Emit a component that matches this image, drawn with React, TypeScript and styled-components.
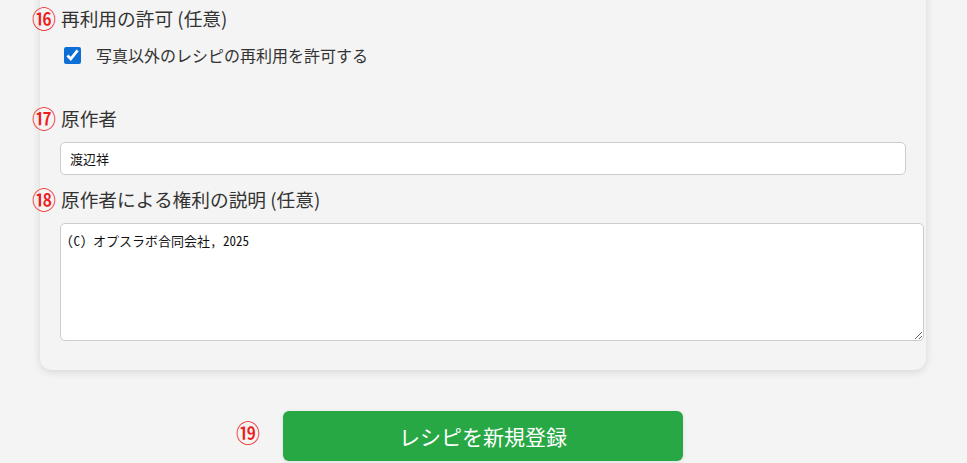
import React from 'react'
import styled, { createGlobalStyle } from 'styled-components'

const GlobalStyle = createGlobalStyle`
    html, body {
        margin: 0;
        padding: 0;
        background: #f4f4f4;
    }

    body {
        font-family: "Noto Sans CJK JP", "Noto Sans", sans-serif;
        color: #333;
    }
`

const App: React.FC = () => {
    return (
        <Page>
            <GlobalStyle />
            <Card>
                <Label>
                    <Marker>⑯</Marker>
                    <span>再利用の許可 (任意)</span>
                </Label>
                <CheckRow>
                    <Check type="checkbox" defaultChecked />
                    <span>写真以外のレシピの再利用を許可する</span>
                </CheckRow>

                <Label $gap={37}>
                    <Marker>⑰</Marker>
                    <span>原作者</span>
                </Label>
                <TextInput type="text" defaultValue="渡辺祥" />

                <Label $gap={10}>
                    <Marker>⑱</Marker>
                    <span>原作者による権利の説明 (任意)</span>
                </Label>
                <TextArea defaultValue="(C) オプスラボ合同会社, 2025" />
            </Card>

            <Actions>
                <Marker>⑲</Marker>
                <SubmitButton type="button">レシピを新規登録</SubmitButton>
                <span />
            </Actions>
        </Page>
    )
}

const Page = styled.div`
    width: 967px;
    height: 463px;
    overflow: hidden;
`

const Card = styled.div`
    margin: -40px 41px 0 40px;
    padding: 44px 20px 29px 20px;
    background: #f4f4f4;
    border-radius: 12px;
    box-shadow: 0 2px 8px rgba(0, 0, 0, 0.12);
`

const Label = styled.div<{ $gap?: number }>`
    display: flex;
    align-items: center;
    gap: 5px;
    margin-top: ${p => p.$gap ?? 0}px;
    margin-left: -28px;
    font-size: 18.7px;
    line-height: 27px;
    color: #333;
`

const Marker = styled.span`
    font-size: 24px;
    line-height: 1;
    font-weight: 500;
    color: #ee1c1c;
`

const CheckRow = styled.label`
    display: flex;
    align-items: center;
    gap: 15px;
    height: 24px;
    margin-top: 12px;
    padding-left: 4px;
    font-size: 16px;
    color: #333;
`

const Check = styled.input`
    width: 17px;
    height: 17px;
    margin: 0;
    accent-color: #0b6fd6;
`

const fieldBase = `
    box-sizing: border-box;
    display: block;
    border: 1px solid #cccccc;
    border-radius: 5px;
    background: #fff;
    color: #111;
    font-family: "Noto Sans Mono CJK JP", "Noto Sans CJK JP", monospace;
    font-size: 13px;
    outline: none;
`

const TextInput = styled.input`
    ${fieldBase}
    width: 100%;
    height: 33px;
    margin-top: 11px;
    padding: 0 9px;
    font-family: "Noto Sans CJK JP", sans-serif;
`

const TextArea = styled.textarea`
    ${fieldBase}
    width: calc(100% + 18px);
    height: 118px;
    margin-top: 11px;
    padding: 8px 6px;
    line-height: 18px;
    resize: vertical;
`

const Actions = styled.div`
    display: grid;
    grid-template-columns: 1fr auto 1fr;
    align-items: start;
    column-gap: 23px;
    margin-top: 41px;
    padding-right: 1px;

    & > ${Marker} {
        justify-self: end;
        margin-top: 9px;
    }
`

const SubmitButton = styled.button`
    width: 400px;
    height: 50px;
    border: none;
    border-radius: 6px;
    background: #28a745;
    color: #fff;
    font-family: "Noto Sans CJK JP", sans-serif;
    font-size: 21px;
    box-shadow: 0 1px 4px rgba(0, 0, 0, 0.1);
    cursor: pointer;
`

export default App
